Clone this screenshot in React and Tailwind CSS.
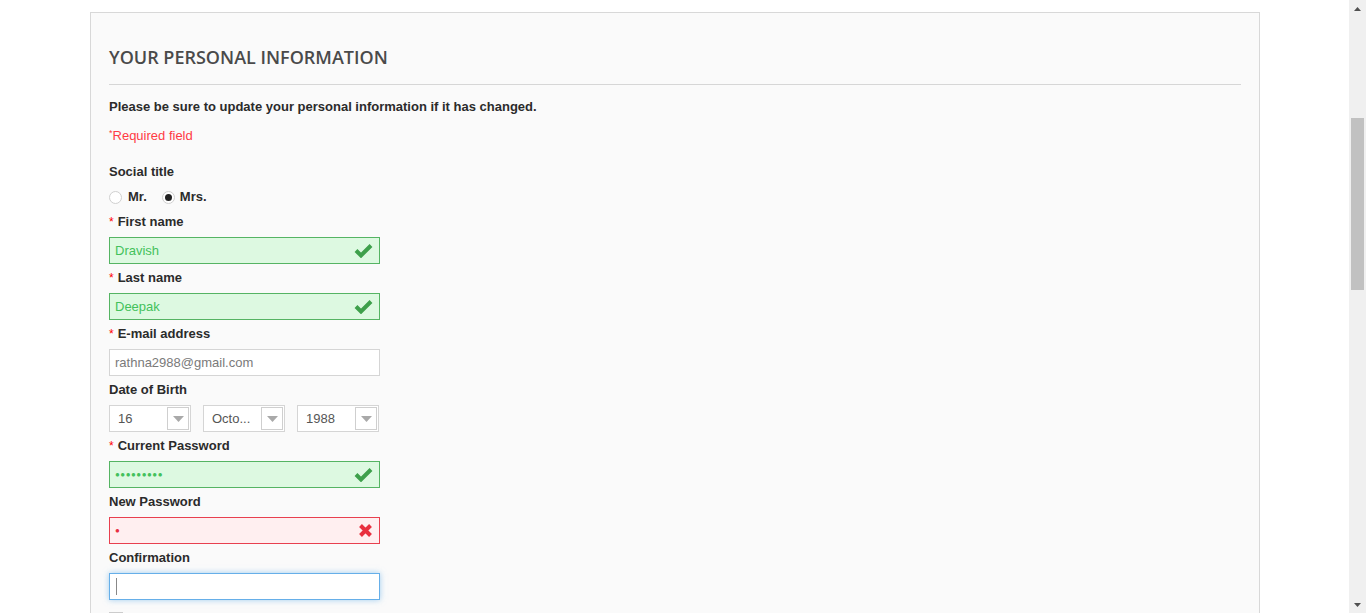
import React from 'react';

const font = { fontFamily: '"Liberation Sans", Arial, sans-serif' };

const CheckIcon = () => (
  <svg width="19" height="15" viewBox="0 0 19 15" className="shrink-0">
    <path d="M2 7.5 L7 12.5 L17 2.5" fill="none" stroke="#3ea04b" strokeWidth="4" strokeLinejoin="miter" strokeLinecap="butt" />
  </svg>
);

const CrossIcon = () => (
  <svg width="15" height="15" viewBox="0 0 15 15" className="shrink-0">
    <path d="M2.5 2.5 L12.5 12.5 M12.5 2.5 L2.5 12.5" fill="none" stroke="#e8303f" strokeWidth="4" />
  </svg>
);

const Label = ({ children, required }) => (
  <div className="h-[18px] leading-[18px] text-[13px] font-bold text-[#2b2b2b] flex items-center">
    {required && <span className="text-[#ff0000] font-normal mr-[4px] text-[12px]">*</span>}
    {children}
  </div>
);

const Field = ({ label, required, value, state, type }) => {
  const styles = {
    ok: 'bg-[#ddf9e1] border-[#55b463] text-[#43c15b]',
    bad: 'bg-[#ffeff0] border-[#e8404f] text-[#e8303f]',
    plain: 'bg-white border-[#d5d5d5] text-[#7a7a7a]',
    focus: 'bg-white border-[#66afe9] shadow-[0_0_6px_rgba(102,175,233,0.6)]',
  };
  return (
    <div className="flex flex-col">
      <Label required={required}>{label}</Label>
      <div className={`mt-[6px] w-[271px] h-[27px] border flex items-center pl-[5px] pr-[6px] text-[13px] ${styles[state]}`}>
        {state === 'focus' && <span className="w-px h-[17px] bg-[#888] ml-[1px]" />}
        <span className={`flex-1 ${type === 'password' ? 'text-[8px] tracking-[0.5px]' : ''}`}>{value}</span>
        {state === 'ok' && <CheckIcon />}
        {state === 'bad' && <CrossIcon />}
      </div>
    </div>
  );
};

const Select = ({ value }) => (
  <div className="w-[82px] h-[27px] border border-[#d5d5d5] bg-white flex items-center pl-[8px] pr-[1px] text-[13px] text-[#555]">
    <span className="flex-1">{value}</span>
    <span className="w-[22px] h-[23px] border border-[#cfcfcf] flex items-center justify-center">
      <svg width="11" height="6" viewBox="0 0 11 6"><path d="M0 0 H11 L5.5 6 Z" fill="#a9a9a9" /></svg>
    </span>
  </div>
);

const Scrollbar = () => (
  <div className="w-[17px] h-full bg-[#f0f0f0] flex flex-col items-center">
    <div className="h-[17px] flex items-center justify-center">
      <svg width="7" height="4" viewBox="0 0 7 4"><path d="M3.5 0 L7 4 H0 Z" fill="#505050" /></svg>
    </div>
    <div className="mt-[101px] w-[13px] h-[172px] bg-[#c1c1c1]" />
    <div className="flex-1" />
    <div className="h-[17px] flex items-center justify-center">
      <svg width="7" height="4" viewBox="0 0 7 4"><path d="M0 0 H7 L3.5 4 Z" fill="#505050" /></svg>
    </div>
  </div>
);

export default function App() {
  return (
    <div className="w-[1366px] h-[613px] overflow-hidden flex bg-white" style={font}>
      <div className="flex-1 pt-[12px] pl-[90px] pr-[89px] overflow-hidden">
        <div className="border border-[#d8d8d8] bg-[#fafafa] px-[18px] pt-[32px] pb-10 h-[700px]">
          <h1
            className="text-[18px] leading-[24px] font-semibold text-[#4a4a4a] pb-[15px] border-b border-[#d6d6d6]"
            style={{ fontFamily: '"Open Sans", sans-serif' }}
          >
            YOUR PERSONAL INFORMATION
          </h1>
          <p className="mt-[13px] h-[18px] leading-[18px] text-[13px] font-bold text-[#2b2b2b]">
            Please be sure to update your personal information if it has changed.
          </p>
          <p className="mt-[11px] h-[18px] leading-[18px] text-[13px] text-[#ff3a45]">
            <sup className="text-[9px] -top-[4px]">*</sup>Required field
          </p>

          <div className="mt-[18px]">
            <Label>Social title</Label>
            <div className="mt-[7px] h-[18px] flex items-center text-[13px] font-bold text-[#2b2b2b]">
              <span className="w-[13px] h-[13px] rounded-full border border-[#d0d0d0] bg-white" />
              <span className="ml-[6px]">Mr.</span>
              <span className="ml-[15px] w-[13px] h-[13px] rounded-full border border-[#d0d0d0] bg-white flex items-center justify-center">
                <span className="w-[7px] h-[7px] rounded-full bg-[#222]" />
              </span>
              <span className="ml-[5px]">Mrs.</span>
            </div>
          </div>

          <div className="mt-[7px] flex flex-col gap-[5px]">
            <Field label="First name" required value="Dravish" state="ok" />
            <Field label="Last name" required value="Deepak" state="ok" />
            <Field label="E-mail address" required value="rathna2988@gmail.com" state="plain" />
            <div className="flex flex-col">
              <Label>Date of Birth</Label>
              <div className="mt-[6px] flex gap-[12px]">
                <Select value="16" />
                <Select value="Octo..." />
                <Select value="1988" />
              </div>
            </div>
            <Field label="Current Password" required value="●●●●●●●●●" state="ok" type="password" />
            <Field label="New Password" value="●" state="bad" type="password" />
            <Field label="Confirmation" value="" state="focus" />
            <div className="mt-[4px] flex items-center gap-[6px] text-[13px] text-[#2b2b2b]">
              <span className="w-[14px] h-[14px] border border-[#ccc] bg-white" />
              <span>Sign up for our newsletter</span>
            </div>
          </div>
        </div>
      </div>
      <Scrollbar />
    </div>
  );
}
